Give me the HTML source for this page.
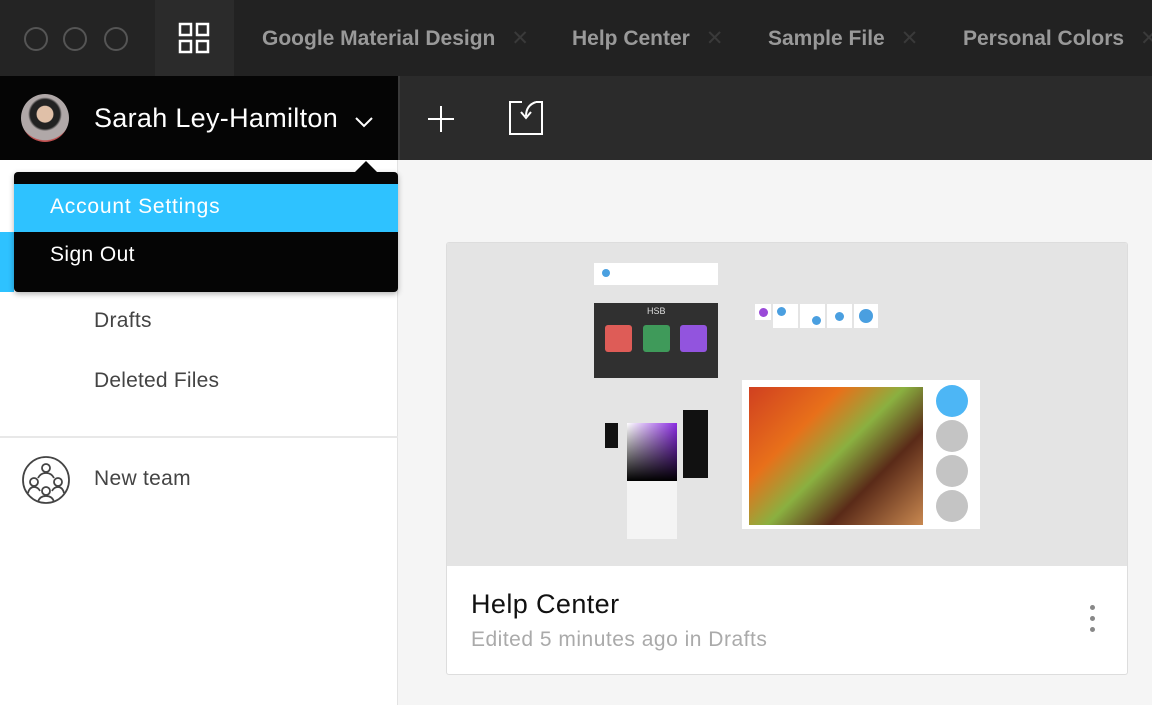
<!DOCTYPE html>
<html><head><style>
*{margin:0;padding:0;box-sizing:border-box}
body{width:1152px;height:705px;overflow:hidden;font-family:"Liberation Sans",sans-serif;background:#f5f5f5;position:relative}
.a{position:absolute}
.tab{position:absolute;top:26px;font-size:21px;font-weight:bold;color:#999;white-space:nowrap}
.tab span{color:#3a3a3a;margin-left:16px;font-weight:normal}
.dot{position:absolute;top:27px;width:24px;height:24px;border:2px solid #555;border-radius:50%}
.pin{position:absolute;background:#fff}
.pin i{position:absolute;width:9px;height:9px;border-radius:50%;background:#4a9fe0}
</style></head><body>
<div class="a" style="left:0;top:0;width:1152px;height:76px;background:#222"></div>
<div class="a" style="left:0;top:0;width:155px;height:76px;background:#242424"></div>
<div class="dot" style="left:24px"></div><div class="dot" style="left:63px"></div><div class="dot" style="left:104px"></div>
<div class="a" style="left:155px;top:0;width:79px;height:76px;background:#2b2b2b"></div>
<svg class="a" style="left:178px;top:22px" width="32" height="32" fill="none" stroke="#fff" stroke-width="2.5"><rect x="2" y="2" width="11" height="11"/><rect x="19" y="2" width="11" height="11"/><rect x="2" y="19" width="11" height="11"/><rect x="19" y="19" width="11" height="11"/></svg>
<div class="tab" style="left:262px">Google Material Design<span>✕</span></div>
<div class="tab" style="left:572px">Help Center<span>✕</span></div>
<div class="tab" style="left:768px">Sample File<span>✕</span></div>
<div class="tab" style="left:963px">Personal Colors<span>✕</span></div>

<div class="a" style="left:0;top:76px;width:398px;height:84px;background:#050505"></div>
<div class="a" style="left:398px;top:76px;width:754px;height:84px;background:#2b2b2b;border-left:2px solid #3a3a3a"></div>
<div class="a" style="left:21px;top:94px;width:48px;height:48px;border-radius:50%;background:radial-gradient(circle at 50% 42%,#e0c0a8 0 22%,#222 24% 40%,#b0a8a8 46% 70%,#c05050 72%)"></div>
<div class="a" style="left:94px;top:103px;font-size:27px;color:#fff;letter-spacing:0.3px">Sarah Ley-Hamilton</div>
<svg class="a" style="left:354px;top:116px" width="20" height="12" fill="none" stroke="#fff" stroke-width="2"><path d="M2 2l8 8 8-8"/></svg>
<svg class="a" style="left:426px;top:104px" width="30" height="30" stroke="#fff" stroke-width="2"><path d="M15 2v26M2 15h26"/></svg>
<svg class="a" style="left:508px;top:100px" width="36" height="36" fill="none" stroke="#fff" stroke-width="2"><path d="M14 2H2v32h32V2h-6"/><path d="M28 2c-6 2-10 6-10 14"/><path d="M13 12l5 6 5-6"/></svg>

<div class="a" style="left:0;top:160px;width:398px;height:545px;background:#fff;border-right:1px solid #e3e3e3"></div>
<div class="a" style="left:0;top:232px;width:14px;height:60px;background:#2ec2ff"></div>
<div class="a" style="left:14px;top:172px;width:384px;height:120px;background:#050505;border-radius:4px;box-shadow:0 2px 6px rgba(0,0,0,.3)"></div>
<div class="a" style="left:355px;top:161px;width:0;height:0;border-left:11px solid transparent;border-right:11px solid transparent;border-bottom:11px solid #050505"></div>
<div class="a" style="left:14px;top:184px;width:384px;height:48px;background:#2ec2ff"></div>
<div class="a" style="left:50px;top:195px;font-size:21px;color:#fff;letter-spacing:0.8px">Account Settings</div>
<div class="a" style="left:50px;top:243px;font-size:21px;color:#fff;letter-spacing:0.4px">Sign Out</div>
<div class="a" style="left:94px;top:309px;font-size:21px;color:#444;letter-spacing:0.3px">Drafts</div>
<div class="a" style="left:94px;top:369px;font-size:21px;color:#444;letter-spacing:0.2px">Deleted Files</div>
<div class="a" style="left:0;top:436px;width:398px;height:2px;background:#e8e8e8"></div>
<svg class="a" style="left:21px;top:455px" width="50" height="50" fill="none" stroke="#444" stroke-width="1.8"><circle cx="25" cy="25" r="23"/><circle cx="25" cy="13" r="4"/><circle cx="13" cy="27" r="4"/><circle cx="37" cy="27" r="4"/><circle cx="25" cy="36" r="4"/><path d="M17 23c2-4 5-5 8-5s6 1 8 5M7 38c1-4 3-6 6-6s5 2 6 4M31 36c1-2 3-4 6-4s5 2 6 6M17 47c1-4 4-6 8-6s7 2 8 6"/></svg>
<div class="a" style="left:94px;top:467px;font-size:21px;color:#444;letter-spacing:0.3px">New team</div>

<div class="a" style="left:446px;top:242px;width:682px;height:433px;background:#fff;border:1px solid #ddd;border-radius:3px;overflow:hidden">
<div class="a" style="left:0;top:0;width:682px;height:323px;background:#e4e4e4"></div>
<div class="a" style="left:147px;top:20px;width:124px;height:22px;background:#fff"></div>
<div class="a" style="left:155px;top:26px;width:8px;height:8px;border-radius:50%;background:#4aa0e0"></div>
<div class="a" style="left:147px;top:60px;width:124px;height:75px;background:#303030"></div>
<div class="a" style="left:200px;top:63px;font-size:9px;color:#ddd">HSB</div>
<div class="a" style="left:158px;top:82px;width:27px;height:27px;border-radius:3px;background:#de5c57"></div>
<div class="a" style="left:196px;top:82px;width:27px;height:27px;border-radius:3px;background:#3f9a5a"></div>
<div class="a" style="left:233px;top:82px;width:27px;height:27px;border-radius:3px;background:#9254de"></div>
<div class="pin" style="left:308px;top:61px;width:16px;height:16px"><i style="left:4px;top:4px;background:#9a4ad8"></i></div>
<div class="pin" style="left:326px;top:61px;width:25px;height:24px"><i style="left:4px;top:3px"></i></div>
<div class="pin" style="left:353px;top:61px;width:25px;height:24px"><i style="left:12px;top:12px"></i></div>
<div class="pin" style="left:380px;top:61px;width:25px;height:24px"><i style="left:8px;top:8px"></i></div>
<div class="pin" style="left:407px;top:61px;width:24px;height:24px"><i style="left:5px;top:5px;width:14px;height:14px"></i></div>
<div class="a" style="left:295px;top:137px;width:238px;height:149px;background:#fff"></div>
<div class="a" style="left:302px;top:144px;width:174px;height:138px;background:linear-gradient(135deg,#d04020,#e8701a 30%,#8ab040 50%,#5a2a18 70%,#c88850)"></div>
<div class="a" style="left:489px;top:142px;width:32px;height:32px;border-radius:50%;background:#4db6f5"></div>
<div class="a" style="left:489px;top:177px;width:32px;height:32px;border-radius:50%;background:#c4c4c4"></div>
<div class="a" style="left:489px;top:212px;width:32px;height:32px;border-radius:50%;background:#c4c4c4"></div>
<div class="a" style="left:489px;top:247px;width:32px;height:32px;border-radius:50%;background:#c4c4c4"></div>
<div class="a" style="left:180px;top:180px;width:50px;height:58px;background:linear-gradient(to bottom,transparent,#000),linear-gradient(to right,#fff,#8a2be2)"></div>
<div class="a" style="left:180px;top:238px;width:50px;height:58px;background:#f4f4f4"></div>
<div class="a" style="left:236px;top:167px;width:25px;height:68px;background:#111"></div>
<div class="a" style="left:158px;top:180px;width:13px;height:25px;background:#111"></div>
<div class="a" style="left:24px;top:346px;font-size:27px;color:#111;letter-spacing:0.4px">Help Center</div>
<div class="a" style="left:24px;top:385px;font-size:21px;color:#aaa;letter-spacing:0.5px">Edited 5 minutes ago in Drafts</div>
<div class="a" style="left:643px;top:362px;width:5px;height:5px;border-radius:50%;background:#888;box-shadow:0 11px 0 #888,0 22px 0 #888"></div>
</div>
</body></html>
